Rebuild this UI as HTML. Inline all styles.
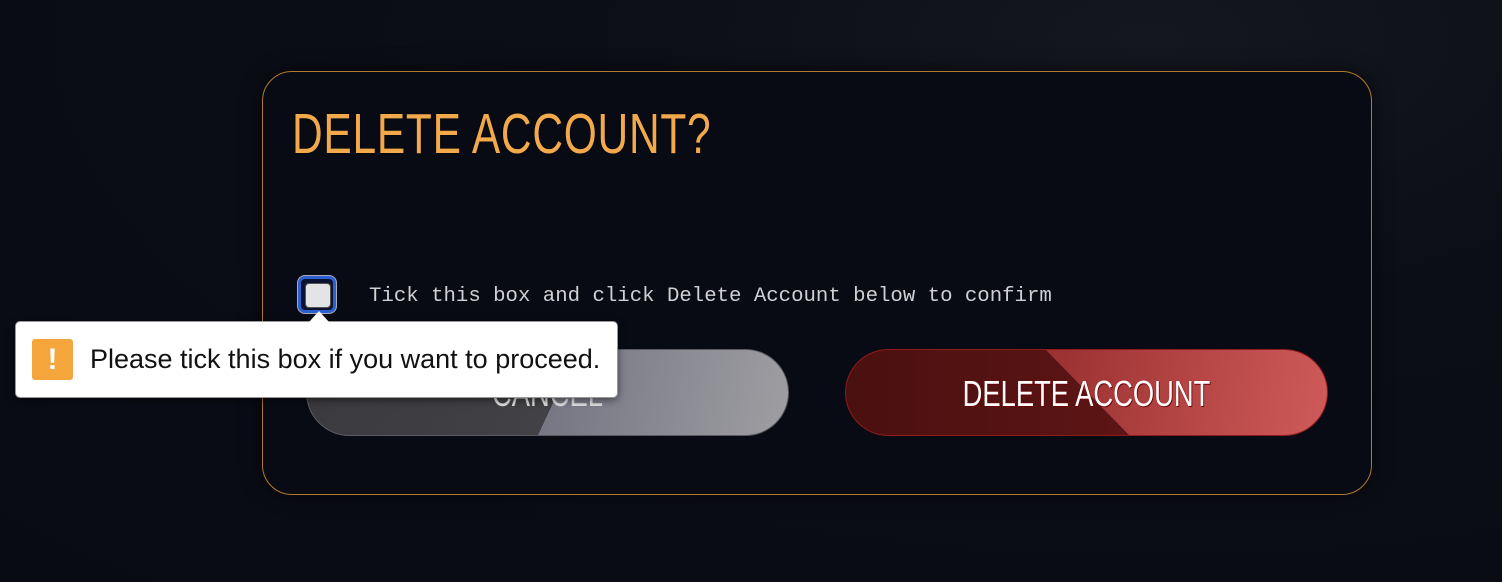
<!DOCTYPE html>
<html><head><meta charset="utf-8"><style>
html,body{margin:0;padding:0;width:1502px;height:582px;overflow:hidden;background:#0a0c15;font-family:"Liberation Sans",sans-serif}
body{background:radial-gradient(ellipse at 1150px 40px,#151720 0,#0c0e17 35%,#090b13 100%)}
.panel{position:absolute;left:262px;top:71px;width:1108px;height:422px;border:1.5px solid #b07a30;border-radius:30px;background:#090b14;box-shadow:0 0 20px rgba(0,0,0,.6)}
.title{position:absolute;left:292px;top:101px;font-size:57px;color:#f2a94c;transform:scaleX(.745);transform-origin:0 0;white-space:nowrap;letter-spacing:1px;text-shadow:0 0 2px #000}
.cb{position:absolute;left:298px;top:276px;width:32px;height:31px;border:3px solid #2c5fd0;border-radius:7px;background:#0d1230;box-shadow:0 0 0 1px #aab}
.cb i{position:absolute;left:4px;top:4px;width:24px;height:23px;background:#e4e4e6;border-radius:4px;border:1px solid #555}
.lbl{position:absolute;left:369px;top:285px;font-family:"Liberation Mono",monospace;font-size:20.7px;color:#d0d0d4;white-space:nowrap}
.btn{position:absolute;top:349px;width:481px;height:85px;border-radius:44px;overflow:hidden}
.btn span{position:absolute;left:0;right:0;top:23px;text-align:center;font-size:36px;color:#fff;transform:scaleX(.76);white-space:nowrap}
.cancel{left:306px;border:1.5px solid #5a5a60;background:linear-gradient(115deg,#3a3a3e 0,#424246 52%,transparent 52%),linear-gradient(100deg,#4e4e66,#9e9ea2)}
.del{left:845px;border:1.5px solid #8e1a1a;background:linear-gradient(90deg,#4a1010,#6a1818)}
.del b{position:absolute;left:200px;top:0;width:400px;height:100%;background:linear-gradient(100deg,#9a3030,#e36c6a);clip-path:polygon(0 0,100% 0,100% 100%,83px 100%)}
.del span{text-shadow:0 0 1px #900,1px 1px 0 #600}
.tip{position:absolute;left:15px;top:321px;width:601px;height:75px;background:#fff;border:1px solid #999;border-radius:5px;box-shadow:0 2px 8px rgba(0,0,0,.5)}
.tip:before{content:"";position:absolute;left:293px;top:-11px;border:10px solid transparent;border-bottom:11px solid #fff;border-top:0}
.ic{position:absolute;left:16px;top:17px;width:41px;height:41px;background:#f4a63c;border-radius:3px;color:#fff;text-align:center;font-weight:bold;font-size:30px;line-height:41px}
.tt{position:absolute;left:74px;top:22px;font-size:27px;color:#111;white-space:nowrap}
</style></head><body>
<div class="panel"></div>
<div class="title">DELETE ACCOUNT?</div>
<div class="cb"><i></i></div>
<div class="lbl">Tick this box and click Delete Account below to confirm</div>
<div class="btn cancel"><span style="color:#ddd">CANCEL</span></div>
<div class="btn del"><b></b><span>DELETE ACCOUNT</span></div>
<div class="tip"><div class="ic">!</div><div class="tt">Please tick this box if you want to proceed.</div></div>
</body></html>
